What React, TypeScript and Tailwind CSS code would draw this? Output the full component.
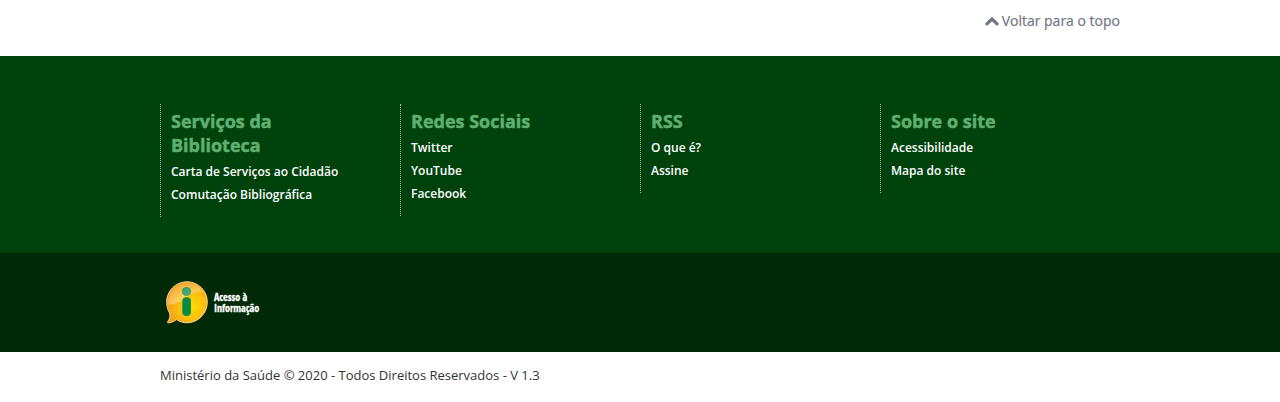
const columns = [
  { title: 'Serviços da Biblioteca', links: ['Carta de Serviços ao Cidadão', 'Comutação Bibliográfica'] },
  { title: 'Redes Sociais', links: ['Twitter', 'YouTube', 'Facebook'] },
  { title: 'RSS', links: ['O que é?', 'Assine'] },
  { title: 'Sobre o site', links: ['Acessibilidade', 'Mapa do site'] },
];

function InfoBalloon() {
  return (
    <svg viewBox="0 0 42 43" className="h-[43px] w-[42px]" aria-hidden="true">
      <defs>
        <radialGradient id="gold" cx="0.62" cy="0.6" r="0.62">
          <stop offset="0" stopColor="#ffdc00" />
          <stop offset="0.5" stopColor="#fdc010" />
          <stop offset="1" stopColor="#f49a1c" />
        </radialGradient>
        <linearGradient id="gloss" x1="0" y1="0" x2="0.5" y2="1">
          <stop offset="0" stopColor="#fff" stopOpacity="0.08" />
          <stop offset="1" stopColor="#fff" stopOpacity="0.38" />
        </linearGradient>
      </defs>
      <path
        d="M21 .8C32.3 .8 41.3 9.8 41.3 21S32.3 41.8 21 41.8c-4 0-7.500-1.200-10.500-3.200-2 1.500-5.500 3.400-8.700 3.200-.6-.2-.5-.8 0-1.400 2-2.500 2.600-5.300 1.800-8.400C1.600 28.900 .7 25 .7 21 .7 9.800 9.700.8 21 .8Z"
        fill="url(#gold)"
        stroke="#f9d48c"
        strokeWidth="1"
      />
      <circle cx="20.500" cy="10.500" r="4.600" fill="#078a43" />
      <path d="M2.500 24C1.500 11 9.500 2.300 21 2.300c7 0 12.800 3.400 16 8.700C27 9.500 24 14 18 18 13 21.500 8 23.500 2.500 24Z" fill="url(#gloss)" />
      <rect x="16.300" y="16.300" width="8.600" height="18.600" rx="4" fill="#078a43" />
    </svg>
  );
}

export default function App() {
  return (
    <div className="bg-white font-['Open_Sans',sans-serif] text-[#333]">
      <div className="mx-auto flex h-14 max-w-[960px] items-start justify-end pt-[10px]">
        <a href="#topo" className="flex items-center gap-[3px] text-sm leading-[22px] text-[#717782] [-webkit-text-stroke:0.2px]">
          <svg viewBox="0 0 14 10" className="h-[10px] w-[14px]" fill="none" stroke="currentColor" strokeWidth="3.200" aria-hidden="true">
            <path d="M2 7.800 7 3 12 7.800" strokeLinecap="round" />
          </svg>
          Voltar para o topo
        </a>
      </div>
      <footer>
        <div className="bg-[#00420c]">
          <nav className="mx-auto grid max-w-[960px] grid-cols-4 items-start pt-12 pb-9">
            {columns.map((column) => (
              <section key={column.title} className="border-l border-dotted border-[#a3c0a7] pt-[5px] pr-[60px] pb-[11px] pl-[10px]">
                <h2 className="mb-[3px] text-lg leading-6 font-bold text-[#5fb06f] [-webkit-text-stroke:0.5px]">{column.title}</h2>
                <ul className="text-xs leading-[23px] font-semibold whitespace-nowrap text-white">
                  {column.links.map((link) => (
                    <li key={link}>
                      <a href="#">{link}</a>
                    </li>
                  ))}
                </ul>
              </section>
            ))}
          </nav>
        </div>
        <div className="bg-[#002907]">
          <div className="mx-auto max-w-[960px] px-[6px] pt-7 pb-7">
            <a href="#" className="flex w-fit items-center gap-[6px] text-white">
              <InfoBalloon />
              <span className="flex flex-col font-['Open_Sans_Condensed','Open_Sans',sans-serif] text-[10px] leading-[11px] font-bold [-webkit-text-stroke:0.3px]">
                <span>Acesso à</span>
                <span>Informação</span>
              </span>
            </a>
          </div>
        </div>
        <p className="mx-auto max-w-[960px] pt-3 text-[13px] leading-[23px]">Ministério da Saúde © 2020 - Todos Direitos Reservados - V 1.3</p>
      </footer>
    </div>
  );
}
